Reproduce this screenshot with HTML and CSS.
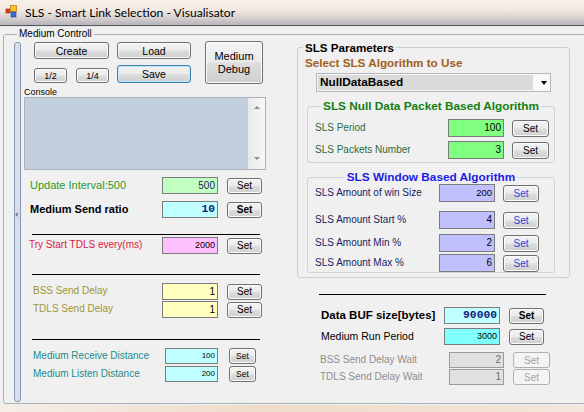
FILE: index.html
```html
<!DOCTYPE html>
<html>
<head>
<meta charset="utf-8">
<title>SLS - Smart Link Selection - Visualisator</title>
<link rel="stylesheet" href="styles.css">
</head>
<body>
<div class="window">
  <div class="titlebar">
    <svg class="appicon" width="16" height="16" viewBox="0 0 16 16">
      <rect x="1" y="5" width="4" height="4" fill="#e23b2b" stroke="#9c1f14" stroke-width="0.6"/>
      <rect x="5.5" y="1.5" width="6" height="6" fill="#f7c91e" stroke="#b58612" stroke-width="0.8"/>
      <rect x="6" y="8" width="5" height="5" fill="#3b6fd3" stroke="#1c3f8c" stroke-width="0.6"/>
    </svg>
    <span class="title">SLS - Smart Link Selection - Visualisator</span>
  </div>
  <div class="form">
    <fieldset class="grp outer">
      <legend class="outer-lg">Medium Controll</legend>
      <div class="split">
        <div class="splitter"><span class="grip"></span></div>
        <div class="left">
          <div class="btnbar">
            <div class="colA">
              <button class="btn create">Create</button>
              <div class="halves">
                <button class="btn half">1/2</button>
                <button class="btn half">1/4</button>
              </div>
            </div>
            <div class="colB">
              <button class="btn load">Load</button>
              <button class="btn save">Save</button>
            </div>
            <button class="btn debug">Medium<br>Debug</button>
          </div>
          <div class="console-lbl">Console</div>
          <div class="console">
            <div class="console-text"></div>
            <div class="vscroll"><span class="arr-up"></span><span class="arr-down"></span></div>
          </div>

          <div class="row lrow r-update">
            <span class="lbl c-green f11">Update Interval:500</span>
            <span class="inp bg-lgreen c-navy">500</span>
            <button class="btn set">Set</button>
          </div>
          <div class="row lrow r-ratio">
            <span class="lbl bold f11">Medium Send ratio</span>
            <span class="inp bg-cyan mono">10</span>
            <button class="btn set bold">Set</button>
          </div>
          <div class="sep s1"></div>
          <div class="row lrow r-try">
            <span class="lbl c-crimson">Try Start TDLS every(ms)</span>
            <span class="inp bg-pink f9">2000</span>
            <button class="btn set">Set</button>
          </div>
          <div class="sep s2"></div>
          <div class="row lrow r-bss">
            <span class="lbl c-olive">BSS Send Delay</span>
            <span class="inp bg-yellow">1</span>
            <button class="btn set">Set</button>
          </div>
          <div class="row lrow r-tdls">
            <span class="lbl c-olive">TDLS Send Delay</span>
            <span class="inp bg-yellow">1</span>
            <button class="btn set">Set</button>
          </div>
          <div class="sep s3"></div>
          <div class="row lrow drow r-recv">
            <span class="lbl c-teal">Medium Receive Distance</span>
            <span class="inp bg-cyan f8">100</span>
            <button class="btn set">Set</button>
          </div>
          <div class="row lrow drow r-listen">
            <span class="lbl c-teal">Medium Listen Distance</span>
            <span class="inp bg-cyan f8">200</span>
            <button class="btn set">Set</button>
          </div>
        </div>

        <div class="right">
          <fieldset class="grp params">
            <legend class="params-lg">SLS Parameters</legend>
            <div class="algo">Select SLS Algorithm to Use</div>
            <div class="combo">
              <span class="combo-val">NullDataBased</span>
              <span class="combo-arrow"></span>
            </div>

            <fieldset class="grp sub null">
              <legend class="sub-lg c-lgreen">SLS Null Data Packet Based Algorithm</legend>
              <div class="row nrow n1">
                <span class="lbl c-dgreen">SLS Period</span>
                <span class="inp bg-green">100</span>
                <button class="btn set">Set</button>
              </div>
              <div class="row nrow n2">
                <span class="lbl c-dgreen">SLS Packets Number</span>
                <span class="inp bg-green">3</span>
                <button class="btn set">Set</button>
              </div>
            </fieldset>

            <fieldset class="grp sub win">
              <legend class="sub-lg c-blue">SLS Window Based Algorithm</legend>
              <div class="row wrow w1">
                <span class="lbl c-midnight">SLS Amount of win Size</span>
                <span class="inp bg-lav f95">200</span>
                <button class="btn set c-setblue">Set</button>
              </div>
              <div class="row wrow w2">
                <span class="lbl c-midnight">SLS Amount Start %</span>
                <span class="inp bg-lav">4</span>
                <button class="btn set c-setblue">Set</button>
              </div>
              <div class="row wrow w3">
                <span class="lbl c-midnight">SLS Amount Min %</span>
                <span class="inp bg-lav">2</span>
                <button class="btn set c-setblue">Set</button>
              </div>
              <div class="row wrow w4">
                <span class="lbl c-midnight">SLS Amount Max %</span>
                <span class="inp bg-lav">6</span>
                <button class="btn set c-setblue">Set</button>
              </div>
            </fieldset>
          </fieldset>

          <div class="rsep"></div>
          <div class="row brow b1">
            <span class="lbl bold f115">Data BUF size[bytes]</span>
            <span class="inp bg-cyan mono">90000</span>
            <button class="btn set bold">Set</button>
          </div>
          <div class="row brow b2">
            <span class="lbl f105">Medium Run Period</span>
            <span class="inp bg-brcyan f9">3000</span>
            <button class="btn set">Set</button>
          </div>
          <div class="row brow dis b3">
            <span class="lbl">BSS Send Delay Wait</span>
            <span class="inp">2</span>
            <button class="btn set">Set</button>
          </div>
          <div class="row brow dis b4">
            <span class="lbl">TDLS Send Delay Wait</span>
            <span class="inp">1</span>
            <button class="btn set">Set</button>
          </div>
        </div>
      </div>
    </fieldset>
  </div>
  <div class="bottomframe"></div>
</div>
</body>
</html>
```

FILE: styles.css
```css
* { box-sizing: border-box; }
html, body { margin: 0; padding: 0; }
body {
  width: 584px; height: 412px; overflow: hidden;
  font-family: "Liberation Sans", Arial, sans-serif;
  font-size: 10px; color: #000;
  background: #f2e8de;
}
.window { width: 584px; height: 412px; display: flex; flex-direction: column; }

/* title bar */
.titlebar {
  height: 26px; flex: none;
  display: flex; align-items: center;
  padding: 0 0 1px 5px;
  border-bottom: 1px solid #57585e;
  background: linear-gradient(180deg, #f8efe6 0%, #f2e9e1 40%, #d8d2d1 70%, #b5b3bb 100%);
}
.appicon { flex: none; margin-right: 4px; }
.title { font-family: Lato, "Open Sans", sans-serif; font-size: 12.1px; color: #000; }

.form {
  height: 379px; flex: none;
  background: #f0f0f0;
  border-top: 1px solid #e4e5ea;
  padding-left: 3px;
}
.bottomframe { flex: 1; background: linear-gradient(90deg, #f5eee7 0%, #efdcc9 45%, #f3e6da 100%); }

/* group boxes */
fieldset { margin: 0; padding: 0; min-width: 0; }
.grp { border: 1px solid #abb0b5; border-radius: 3px; }
.outer { margin-top: 1px; width: 600px; height: 376px; }
.outer-lg { margin-left: 13px; padding: 0 2px; font-size: 10px; line-height: 12px; }

.split { display: flex; height: 363px; }
.splitter {
  flex: none; position: relative;
  margin: 2px 0 0 10px; width: 7px; height: 360px;
  border: 1px solid #8797b0; border-radius: 3px;
  background: #d6dfeb;
}
.grip {
  position: absolute; left: 1px; top: 170px;
  width: 3px; height: 3px;
  border-left: 1px solid #4d5a6e; border-bottom: 1px solid #4d5a6e;
  transform: rotate(45deg);
}

/* left panel */
.left { flex: none; margin-left: 3px; width: 268px; display: flex; flex-direction: column; }

.btn {
  display: flex; align-items: center; justify-content: center;
  padding: 0; margin: 0;
  font-family: "Liberation Sans", Arial, sans-serif; font-size: 10.5px; color: #000;
  border: 1px solid #707070; border-radius: 3px;
  background: linear-gradient(180deg, #f3f3f3 0%, #ebebeb 48%, #dddddd 52%, #cfcfcf 100%);
  box-shadow: inset 0 0 0 1px #fbfbfb;
}
.btnbar { display: flex; align-items: flex-start; margin-top: 1px; padding-left: 10px; height: 43px; }
.colA { display: flex; flex-direction: column; margin-top: 1px; width: 75px; }
.create { height: 17px; width: 75px; }
.halves { display: flex; gap: 9px; margin-top: 9px; }
.half { width: 33px; height: 15px; font-size: 9px; }
.colB { display: flex; flex-direction: column; margin-left: 8px; margin-top: 1px; width: 74px; }
.load { height: 17px; }
.save { height: 18px; margin-top: 6px; border-color: #3c7fb1; box-shadow: inset 0 0 0 1px #bfe6f9; }
.debug { margin-left: 14px; width: 58px; height: 43px; line-height: 13px; font-size: 11px; }

.console-lbl { margin-top: 4px; font-size: 9px; line-height: 9px; height: 9px; }
.console { height: 73px; width: 242px; display: flex; border: 1px solid #a9b0b8; background: #c2cfdc; }
.console-text { flex: 1; }
.vscroll {
  width: 17px; flex: none;
  background: linear-gradient(90deg, #e9e9e9, #f7f7f7);
  display: flex; flex-direction: column; justify-content: space-between; align-items: center;
  padding: 8px 0 9px;
}
.arr-up { width: 0; height: 0; border-left: 3px solid transparent; border-right: 3px solid transparent; border-bottom: 3px solid #8d8d8d; }
.arr-down { width: 0; height: 0; border-left: 3px solid transparent; border-right: 3px solid transparent; border-top: 3px solid #8d8d8d; }

/* rows */
.row { display: flex; align-items: center; }
.lbl { flex: none; white-space: nowrap; padding-bottom: 2px; font-size: 10px; }
.inp {
  flex: none; width: 56px; height: 17px;
  border: 1px solid #7c7c7c;
  text-align: right; padding-right: 2px;
  font-size: 10px; line-height: 15px; color: #000;
  overflow: hidden; white-space: nowrap;
}
.set { flex: none; width: 35px; height: 16px; margin-left: 9px; font-size: 10px; }

.lrow .lbl { width: 138px; padding-left: 6px; }
.r-update { margin-top: 7px; }
.r-ratio { margin-top: 7px; }
.r-try { margin-top: 2px; }
.r-try .lbl { padding-left: 5px; }
.r-bss { margin-top: 8px; }
.r-tdls { margin-top: 1px; }
.r-bss .lbl, .r-tdls .lbl { padding-left: 9px; }
.r-recv { margin-top: 8px; }
.r-listen { margin-top: 2px; }
.drow .lbl { width: 141px; padding-left: 9px; }
.drow .inp { width: 53px; height: 16px; line-height: 14px; }
.drow .set { width: 27px; margin-left: 11px; font-size: 8.5px; }

.sep { height: 1px; background: #000; margin-left: 8px; width: 228px; }
.s1 { margin-top: 16px; }
.s2 { margin-top: 20px; }
.s3 { margin-top: 21px; }

/* right panel */
.right { flex: none; width: 280px; display: flex; flex-direction: column; }
.params { margin: 1px 0 0 5px; width: 273px; padding: 0 0 4px; border-color: #c9cfd5; }
.params-lg { margin-left: 5px; padding: 0 2px; font-weight: bold; font-size: 11.6px; line-height: 13px; }
.algo { margin-top: 2px; padding-left: 7px; font-weight: bold; font-size: 11.7px; line-height: 13px; color: #a15f1d; }
.combo {
  margin: 4px 0 0 18px; width: 235px; height: 19px;
  border: 1px solid #b3b8bd; background: #f8f8f8;
  display: flex; align-items: center; padding: 1px;
}
.combo-val { flex: none; width: 215px; height: 15px; background: #dadada; font-weight: bold; font-size: 11.8px; line-height: 15px; padding-left: 2px; }
.combo-arrow { margin-left: 8px; width: 0; height: 0; border-left: 3px solid transparent; border-right: 3px solid transparent; border-top: 4px solid #000; }

.sub { margin: 9px 0 0 9px; width: 248px; border-color: #cdd3d8; }
.sub-lg { margin: 0 auto; padding: 0 2px; font-weight: bold; font-size: 11.8px; line-height: 11px; }
.null { padding-bottom: 3px; }
.nrow .lbl { width: 140px; padding-left: 7px; }
.nrow .inp { height: 18px; line-height: 16px; }
.nrow .set { width: 37px; height: 17px; margin-left: 8px; }
.n1 { margin-top: 7px; }
.n2 { margin-top: 4px; }

.win { padding-bottom: 0; }
.wrow .lbl { width: 131px; padding-left: 7px; }
.wrow .inp { height: 18px; line-height: 16px; }
.wrow .set { width: 36px; height: 17px; margin-left: 8px; }
.w1 { margin-top: 1px; }
.w2 { margin-top: 9px; }
.w3 { margin-top: 5px; }
.w4 { margin-top: 2px; }

.rsep { margin: 16px 0 0 27px; width: 227px; height: 1px; background: #000; }
.brow .lbl { width: 152px; padding-left: 29px; }
.b1 { margin-top: 12px; }
.b2 { margin-top: 4px; }
.b3 { margin-top: 7px; }
.b4 { margin-top: 1px; }
.dis .lbl { width: 157px; padding-left: 28px; color: #8e8e8e; }
.dis .inp { width: 55px; height: 16px; line-height: 14px; background: #e1e1e1; border-color: #9a9a9a; color: #6d6d6d; }
.dis .set { width: 37px; color: #a3a3a3; border-color: #adb2b5; background: #f4f4f4; box-shadow: none; }

/* text helpers */
.bold { font-weight: bold; }
.f11 { font-size: 11px; }
.f115 { font-size: 11.5px; }
.f105 { font-size: 10.5px; }
.f9 { font-size: 9px; }
.f95 { font-size: 9.5px; }
.f8 { font-size: 8px; }
.mono { font-family: "Liberation Mono", monospace; font-weight: bold; font-size: 11.3px; color: #0d2380; }

.c-green { color: #2b9a2b; }
.c-navy { color: #1c1c6a; }
.c-crimson { color: #d81a45; }
.c-olive { color: #9d9632; }
.c-teal { color: #258a8a; }
.c-dgreen { color: #2d6a3a; }
.c-lgreen { color: #137f13; }
.c-blue { color: #1c1ce4; }
.c-midnight { color: #1b1b66; }
.c-setblue { color: #2447d6; }

.bg-lgreen { background: #c0ffc0; }
.bg-cyan { background: #c0ffff; }
.bg-brcyan { background: #80ffff; }
.bg-pink { background: #ffc0ff; }
.bg-yellow { background: #ffffc0; }
.bg-green { background: #80ff80; }
.bg-lav { background: #c0c0ff; }
```
